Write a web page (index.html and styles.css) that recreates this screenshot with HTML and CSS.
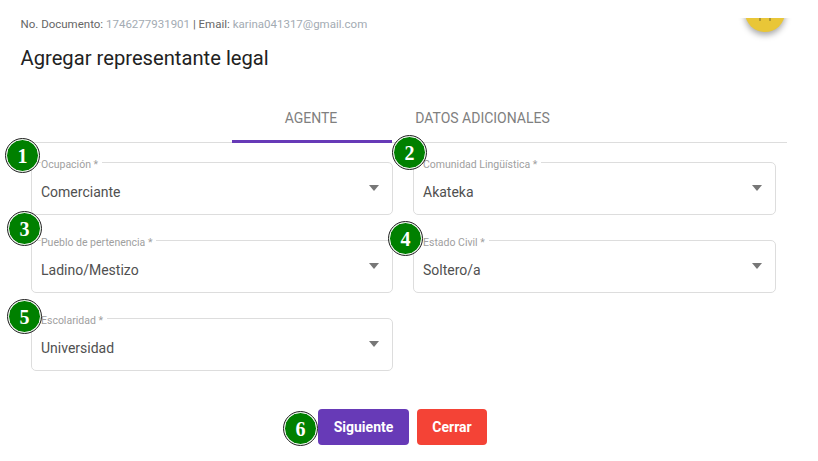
FILE: index.html
```html
<!DOCTYPE html>
<html lang="es">
<head>
<meta charset="utf-8">
<title>Agregar representante legal</title>
<link rel="stylesheet" href="styles.css">
</head>
<body>
<div class="fab-clip"><div class="fab"><svg class="fab-icon" width="14" height="6" viewBox="0 0 14 6"><path d="M2 0v3M12 0v3" stroke="#8a7a30" stroke-width="1.2" fill="none"/></svg></div></div>
<main class="page">
  <p class="meta">No. Documento: <span class="muted">1746277931901</span> | Email: <span class="muted">karina041317@gmail.com</span></p>
  <h1 class="title">Agregar representante legal</h1>
  <nav class="tabs">
    <div class="tab tab-active">AGENTE</div>
    <div class="tab tab-second">DATOS ADICIONALES</div>
  </nav>
  <form class="form-grid">
    <fieldset class="field"><legend class="legend">Ocupación *</legend><span class="value">Comerciante</span><span class="arrow"></span><span class="badge badge-1">1</span></fieldset>
    <fieldset class="field"><legend class="legend">Comunidad Lingüística *</legend><span class="value">Akateka</span><span class="arrow"></span><span class="badge badge-2">2</span></fieldset>
    <fieldset class="field"><legend class="legend">Pueblo de pertenencia *</legend><span class="value">Ladino/Mestizo</span><span class="arrow"></span><span class="badge badge-3">3</span></fieldset>
    <fieldset class="field"><legend class="legend">Estado Civil *</legend><span class="value">Soltero/a</span><span class="arrow"></span><span class="badge badge-4">4</span></fieldset>
    <fieldset class="field"><legend class="legend">Escolaridad *</legend><span class="value">Universidad</span><span class="arrow"></span><span class="badge badge-5">5</span></fieldset>
  </form>
  <div class="actions">
    <span class="badge badge-6">6</span>
    <button class="btn btn-primary" type="button">Siguiente</button>
    <button class="btn btn-danger" type="button">Cerrar</button>
  </div>
</main>
</body>
</html>
```
FILE: styles.css
```css
* { box-sizing: border-box; }
html, body { margin: 0; height: 100%; overflow: hidden; background: #fff; }
body { font-family: Roboto, "Liberation Sans", sans-serif; width: 818px; height: 461px; position: relative; }
.fab-clip { position: absolute; left: 725px; top: 18px; width: 80px; height: 40px; overflow: hidden; }
.fab { position: absolute; left: 20px; top: -26px; width: 40px; height: 40px; border-radius: 50%; background: #e9c637; box-shadow: 0 3px 6px rgba(0,0,0,.35); }
.fab-icon { position: absolute; left: 13px; top: 26px; }
.page { padding: 17px 0 0 20.5px; }
.meta { margin: 0; font-size: 11.5px; line-height: 14px; color: #666; }
.muted { color: #a3abb3; }
.title { margin: 15px 0 0; font-size: 20.2px; line-height: 24px; font-weight: 400; color: #222; }
.tabs { display: flex; margin: 25px 31.5px 0 11.5px; height: 48px; border-bottom: 1px solid #ddd; padding-left: 200px; }
.tab { font-size: 14px; line-height: 46px; height: 48px; text-align: center; color: #808080; }
.tab-active { width: 160px; padding-right: 2px; border-bottom: 3px solid #673ab7; }
.tab-second { width: 181px; }
.form-grid { display: grid; grid-template-columns: 362px 363px; column-gap: 20px; row-gap: 19px; margin: 13px 0 0 10.5px; }
.field { position: relative; margin: 0; padding: 0 9px; height: 59px; border: 1px solid #ddd; border-radius: 5px; min-width: 0; }
.legend { padding: 0 4px 0 0; margin: 0; font-size: 10.5px; line-height: 12px; color: #a0a0a0; transform: translateY(3px); }
.value { display: block; margin-top: 14px; font-size: 14px; line-height: 20px; color: #505050; }
.arrow { position: absolute; right: 13px; top: 17px; width: 0; height: 0; border-left: 5.5px solid transparent; border-right: 5.5px solid transparent; border-top: 6px solid #777; }
.badge { position: absolute; width: 33px; height: 33px; border-radius: 50%; background: #008000; border: 1px solid #fff; outline: 1px solid #222; color: #fff; font-family: "Liberation Serif", serif; font-weight: 700; font-size: 20px; line-height: 32px; text-align: center; }
.badge-1 { left: -26px; top: -29.5px; }
.badge-2 { left: -21px; top: -32px; }
.badge-3 { left: -24px; top: -34.5px; }
.badge-4 { left: -25px; top: -24.5px; }
.badge-5 { left: -24px; top: -24.5px; }
.badge-6 { left: -34px; top: 2.5px; }
.actions { position: relative; display: flex; gap: 8px; margin: 38px 0 0 297.5px; }
.btn { height: 36px; border: 0; border-radius: 4px; font-family: inherit; font-size: 14px; font-weight: 700; color: #fff; padding: 0; }
.btn-primary { width: 91px; background: #673ab7; }
.btn-danger { width: 70px; background: #f44336; }
```
